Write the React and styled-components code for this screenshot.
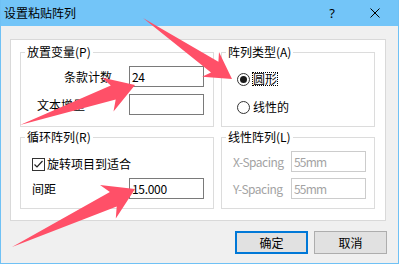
import React from "react";
import styled, { createGlobalStyle } from "styled-components";

const GlobalStyle = createGlobalStyle`
  html, body {
    margin: 0;
    padding: 0;
    background: #ffffff;
  }
  body {
    font-family: "Noto Sans CJK SC", "Noto Sans", sans-serif;
    font-size: 12px;
    color: #000;
  }
`;

const FONT = `"Noto Sans CJK SC", "Noto Sans", sans-serif`;

const Window = styled.div`
  position: relative;
  width: 399px;
  height: 264px;
  box-sizing: border-box;
  border: 1px solid #6fc1f5;
  border-top: 0;
  display: flex;
  flex-direction: column;
  background: #f0f0f0;
`;

const TitleBar = styled.div`
  height: 26px;
  flex: none;
  display: flex;
  align-items: center;
  background: #73c5f8;
  padding-left: 3px;
`;

const Title = styled.div`
  flex: 1;
  line-height: 16px;
  font-size: 12px;
`;

const CaptionButton = styled.div`
  width: ${(p) => p.$w}px;
  height: 26px;
  display: flex;
  align-items: center;
  justify-content: center;
  font-family: "Noto Sans", sans-serif;
  font-size: 13px;
`;

const Body = styled.div`
  flex: 1;
  display: flex;
  flex-direction: column;
  padding: 13px 11px 9px 9px;
  box-sizing: border-box;
`;

const Panel = styled.div`
  width: 376px;
  height: 182px;
  box-sizing: border-box;
  background: #fff;
  border: 1px solid #d9d9d9;
  padding: 4px 10px 11px 9px;
  display: grid;
  grid-template-columns: 194px 154px;
  grid-template-rows: 83px 80px;
  column-gap: 7px;
  row-gap: 2px;
`;

const Group = styled.fieldset`
  margin: 0;
  padding: 0;
  min-width: 0;
  box-sizing: border-box;
  border: 1px solid #dcdcdc;
`;

const Legend = styled.legend`
  margin-left: 4px;
  padding: 0 2px;
  line-height: 16px;
  font-size: 12px;
`;

const GroupBody = styled.div`
  display: flex;
  flex-direction: column;
  padding: ${(p) => p.$pad};
  gap: ${(p) => p.$gap}px;
`;

const FieldRow = styled.div`
  display: grid;
  grid-template-columns: ${(p) => p.$label}px 75px;
  align-items: center;
  height: 21px;
`;

const FieldLabel = styled.span`
  line-height: 16px;
  white-space: nowrap;
  color: ${(p) => (p.$disabled ? "#a3a3a3" : "#000")};
  letter-spacing: ${(p) => (p.$disabled ? "-0.5px" : "0")};
  text-align: ${(p) => (p.$right ? "right" : "left")};
  padding: 0 ${(p) => (p.$right ? 17 : 0)}px 0 ${(p) => p.$inset || 0}px;
`;

const TextBox = styled.input`
  box-sizing: border-box;
  width: 75px;
  height: 21px;
  margin: 0;
  padding: 0 2px;
  border: 1px solid ${(p) => (p.disabled ? "#cccccc" : "#7a7a7a")};
  border-radius: 0;
  background: #fff;
  color: ${(p) => (p.disabled ? "#a3a3a3" : "#000")};
  -webkit-text-fill-color: ${(p) => (p.disabled ? "#a3a3a3" : "#000")};
  letter-spacing: ${(p) => (p.disabled ? "-0.8px" : "-0.3px")};
  opacity: 1;
  font: 12px ${FONT};
  outline: none;
`;

const CheckRow = styled.label`
  display: flex;
  align-items: center;
  gap: 2px;
  height: 16px;
  line-height: 16px;
`;

const CheckBox = styled.span`
  width: 13px;
  height: 13px;
  box-sizing: border-box;
  border: 1px solid #333;
  background: #fff;
  display: flex;
  align-items: center;
  justify-content: center;
`;

const RadioRow = styled.label`
  display: flex;
  align-items: center;
  gap: 2px;
  height: 14px;
`;

const RadioDot = styled.span`
  width: 13px;
  height: 13px;
  box-sizing: border-box;
  border: 1px solid #333;
  border-radius: 50%;
  background: #fff;
  display: flex;
  align-items: center;
  justify-content: center;
  &::after {
    content: "";
    width: 7px;
    height: 7px;
    border-radius: 50%;
    background: ${(p) => (p.$checked ? "#1a1a1a" : "transparent")};
  }
`;

const RadioLabel = styled.span`
  border: 1px dotted ${(p) => (p.$focused ? "#000" : "transparent")};
  line-height: 12px;
  padding: 0;
`;

const ButtonRow = styled.div`
  display: flex;
  justify-content: flex-end;
  gap: 6px;
  margin-top: 10px;
`;

const DialogButton = styled.button`
  box-sizing: border-box;
  width: 73px;
  height: 23px;
  margin: 0;
  padding: 0;
  background: #e1e1e1;
  border: ${(p) => (p.$primary ? "2px solid #0078d7" : "1px solid #adadad")};
  border-radius: 0;
  font: 12px ${FONT};
  color: #000;
`;

const ArrowLayer = styled.svg`
  position: absolute;
  left: -1px;
  top: 0;
  width: 400px;
  height: 265px;
  pointer-events: none;
`;

function arrowPoints(t, p, headLen, headHalf, neckLen, neckHalf) {
  const dx = p[0] - t[0];
  const dy = p[1] - t[1];
  const len = Math.hypot(dx, dy);
  const ux = dx / len;
  const uy = dy / len;
  const nx = -uy;
  const ny = ux;
  const hb = [p[0] - ux * headLen, p[1] - uy * headLen];
  const nb = [p[0] - ux * neckLen, p[1] - uy * neckLen];
  const pts = [
    t,
    [nb[0] + nx * neckHalf, nb[1] + ny * neckHalf],
    [hb[0] + nx * headHalf, hb[1] + ny * headHalf],
    p,
    [hb[0] - nx * headHalf, hb[1] - ny * headHalf],
    [nb[0] - nx * neckHalf, nb[1] - ny * neckHalf],
  ];
  return pts.map((q) => q.map((v) => v.toFixed(1)).join(",")).join(" ");
}

const ARROWS = [
  { t: [20, 125], p: [135, 85], hl: 29, hh: 18, nl: 23, nh: 7.5 },
  { t: [143, 18], p: [232, 79], hl: 26, hh: 15, nl: 21, nh: 6.5 },
  { t: [12, 247], p: [135, 189], hl: 30, hh: 18.5, nl: 24, nh: 8 },
];

export default function App() {
  return (
    <>
      <GlobalStyle />
      <Window>
        <TitleBar>
          <Title>设置粘贴阵列</Title>
          <CaptionButton $w={40}>?</CaptionButton>
          <CaptionButton $w={46}>
            <svg width="10" height="10" viewBox="0 0 10 10">
              <path d="M0.5 0.5 L9.5 9.5 M9.5 0.5 L0.5 9.5" stroke="#000" strokeWidth="1" fill="none" />
            </svg>
          </CaptionButton>
        </TitleBar>
        <Body>
          <Panel>
            <Group>
              <Legend>放置变量(P)</Legend>
              <GroupBody $pad="6px 0 0 0" $gap={7}>
                <FieldRow $label={108}>
                  <FieldLabel $right>条款计数</FieldLabel>
                  <TextBox readOnly defaultValue="24" />
                </FieldRow>
                <FieldRow $label={108}>
                  <FieldLabel $inset={16}>文本增量</FieldLabel>
                  <TextBox readOnly defaultValue="" />
                </FieldRow>
              </GroupBody>
            </Group>
            <Group>
              <Legend>阵列类型(A)</Legend>
              <GroupBody $pad="12px 0 0 15px" $gap={14}>
                <RadioRow>
                  <RadioDot $checked />
                  <RadioLabel $focused>圆形</RadioLabel>
                </RadioRow>
                <RadioRow>
                  <RadioDot />
                  <RadioLabel>线性的</RadioLabel>
                </RadioRow>
              </GroupBody>
            </Group>
            <Group>
              <Legend>循环阵列(R)</Legend>
              <GroupBody $pad="11px 0 0 11px" $gap={6}>
                <CheckRow>
                  <CheckBox>
                    <svg width="11" height="11" viewBox="0 0 11 11">
                      <polyline points="1.5,5.5 4,8 9.5,2" stroke="#222" strokeWidth="1.2" fill="none" />
                    </svg>
                  </CheckBox>
                  旋转项目到适合
                </CheckRow>
                <FieldRow $label={97}>
                  <FieldLabel>间距</FieldLabel>
                  <TextBox readOnly defaultValue="15.000" />
                </FieldRow>
              </GroupBody>
            </Group>
            <Group>
              <Legend>线性阵列(L)</Legend>
              <GroupBody $pad="6px 0 0 11px" $gap={6}>
                <FieldRow $label={58}>
                  <FieldLabel $disabled>X-Spacing</FieldLabel>
                  <TextBox disabled defaultValue="55mm" />
                </FieldRow>
                <FieldRow $label={58}>
                  <FieldLabel $disabled>Y-Spacing</FieldLabel>
                  <TextBox disabled defaultValue="55mm" />
                </FieldRow>
              </GroupBody>
            </Group>
          </Panel>
          <ButtonRow>
            <DialogButton $primary>确定</DialogButton>
            <DialogButton>取消</DialogButton>
          </ButtonRow>
        </Body>
        <ArrowLayer viewBox="0 0 400 265">
          {ARROWS.map((a, i) => (
            <polygon key={i} points={arrowPoints(a.t, a.p, a.hl, a.hh, a.nl, a.nh)} fill="#ff5068" />
          ))}
        </ArrowLayer>
      </Window>
    </>
  );
}
